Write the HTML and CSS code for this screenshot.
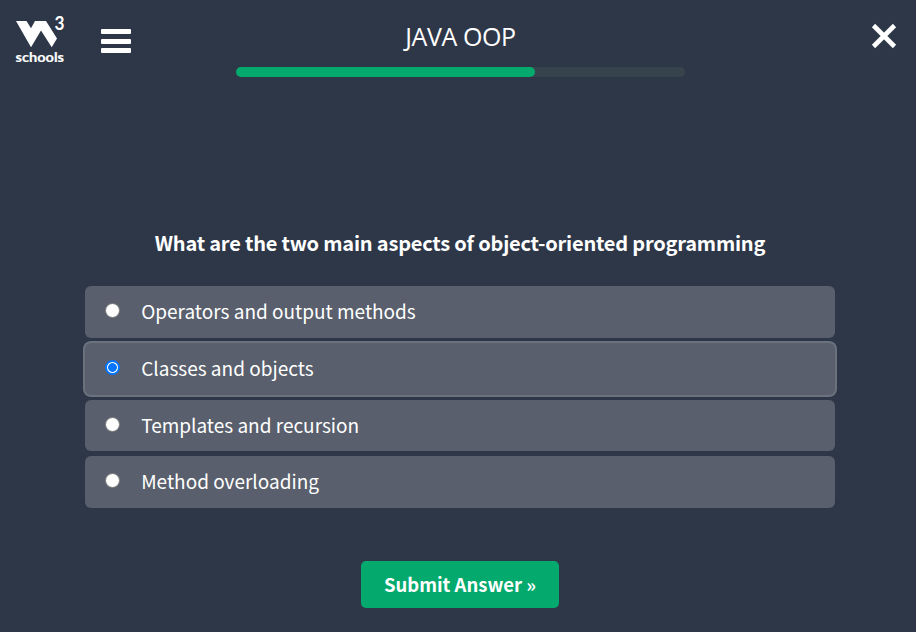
FILE: index.html
```html
<!DOCTYPE html>
<html lang="en">
<head>
<meta charset="utf-8">
<title>Java OOP Quiz</title>
<link rel="stylesheet" href="styles.css">
</head>
<body>
<header class="topbar">
  <div class="left">
    <svg class="logo" width="52" height="60" viewBox="0 -8 52 60" role="img" aria-label="w3schools">
      <path fill="#fff" d="M2 7H12.500L17 14.300L21 7H32L43 24.500L37.700 33.300L27 16.500L17 33.300Z"/>
      <text class="logo-three" x="40.600" y="15.800" textLength="10" lengthAdjust="spacingAndGlyphs">3</text>
      <text class="logo-name" x="1.500" y="48" textLength="48.500" lengthAdjust="spacingAndGlyphs">schools</text>
    </svg>
    <button class="menu" aria-label="Menu"><span></span><span></span><span></span></button>
  </div>
  <div class="heading">
    <h1>JAVA OOP</h1>
    <div class="progress"><div class="bar"></div></div>
  </div>
  <button class="close" aria-label="Close">
    <svg width="26" height="26" viewBox="0 0 26 26"><path d="M2.500 2.500L23.500 23.500M23.500 2.500L2.500 23.500" stroke="#fff" stroke-width="4.600"/></svg>
  </button>
</header>
<main class="quiz">
  <h2>What are the two main aspects of object-oriented programming</h2>
  <form>
    <div class="options">
      <label class="option"><span class="radio"></span><span>Operators and output methods</span></label>
      <label class="option selected"><span class="radio"></span><span>Classes and objects</span></label>
      <label class="option"><span class="radio"></span><span>Templates and recursion</span></label>
      <label class="option"><span class="radio"></span><span>Method overloading</span></label>
    </div>
    <button class="submit" type="button">Submit Answer »</button>
  </form>
</main>
</body>
</html>
```
FILE: styles.css
```css
* { box-sizing: border-box; }
body {
  margin: 0;
  height: 632px;
  overflow: hidden;
  background: #2e3748;
  color: #fff;
  font-family: "Noto Sans CJK SC", "Open Sans", sans-serif;
}
button { border: 0; padding: 0; background: none; color: inherit; font: inherit; }
.topbar {
  display: grid;
  grid-template-columns: 236px 449px 1fr;
  height: 78px;
}
.left { display: flex; align-items: flex-start; padding: 6px 0 0 14px; }
.logo { display: block; }
.logo text { fill: #fff; font-family: Lato, sans-serif; font-weight: 700; }
.logo-three { font-size: 18px; }
.logo-name { font-size: 14px; stroke: #fff; stroke-width: 0.2px; }
.menu { display: flex; flex-direction: column; gap: 4.500px; margin: 23px 0 0 35.400px; }
.menu span { width: 30px; height: 5px; border-radius: 1px; background: #fff; }
.heading h1 {
  margin: 0;
  padding-top: 19px;
  height: 67px;
  text-align: center;
  font: 400 25px/34px "Open Sans", sans-serif;
  letter-spacing: -0.4px;
}
.progress { height: 10px; border-radius: 5px; background: #38444d; }
.bar { width: 299px; height: 10px; border-radius: 5px; background: #04aa6d; }
.close { justify-self: end; align-self: start; margin: 23px 19px 0 0; height: 26px; }
.close svg { display: block; }
.quiz { width: 750px; margin: 149px 0 0 85px; }
h2 {
  margin: 0 0 27px;
  text-align: center;
  white-space: nowrap;
  font-size: 20px;
  line-height: 32px;
  font-weight: 700;
  letter-spacing: -0.2px;
}
.options { display: grid; grid-template-rows: 52px 52px 51px 52px; gap: 5px; }
.option {
  display: flex;
  align-items: center;
  padding: 0 0 2px 20px;
  border-radius: 6px;
  background: #595f6c;
  font-size: 19px;
  line-height: 30px;
}
.selected { box-shadow: 0 0 0 2px #6b727e; }
.radio {
  width: 15px;
  height: 15px;
  margin: -1px 21.200px 0 0;
  border: 1px solid #767676;
  border-radius: 50%;
  background: #fff;
}
.selected .radio { border: 2px solid #0075ff; background: radial-gradient(circle, #0075ff 4px, #fff 4.700px); }
.submit {
  display: block;
  width: 198px;
  height: 47px;
  margin: 53px auto 0;
  padding-bottom: 2px;
  border-radius: 5px;
  background: #04aa6d;
  font-size: 18.500px;
  font-weight: 700;
}
```
